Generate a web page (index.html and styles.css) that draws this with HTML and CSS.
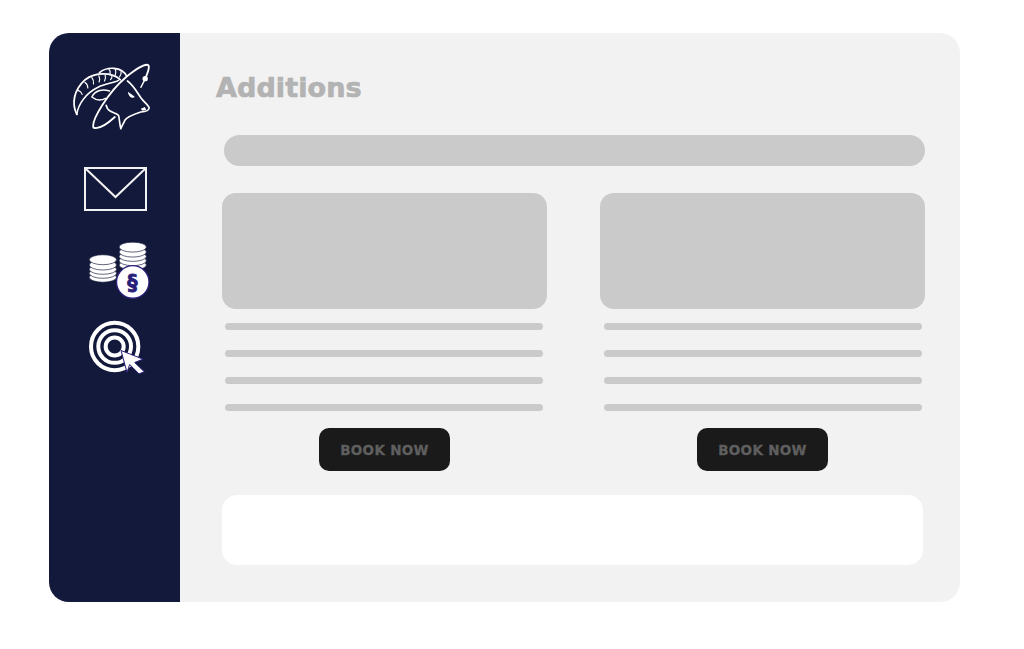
FILE: index.html
```html
<!DOCTYPE html>
<html lang="en">
<head>
  <meta charset="UTF-8" />
  <meta name="viewport" content="width=device-width, initial-scale=1.0"/>
  <title>Additions</title>
  <link rel="stylesheet" href="styles.css">
</head>
<body>
  <div class="frame">
    <nav class="sidebar">
      <svg class="logo" viewBox="60 65 245 210" fill="none" stroke="#fff" stroke-linecap="round" stroke-linejoin="round">
        <!-- ring -->
        <path stroke-width="5.5" d="M130 262C122 240 175 155 228 110C258 86 288 68 295 75C299 84 293 96 288 108M130 262C145 268 172 250 194 230"/>
        <circle cx="285" cy="115" r="8" fill="#fff" stroke="none"/>
        <path stroke-width="4" d="M283 120L272 141"/>
        <!-- head -->
        <path stroke-width="5" d="M232 122C250 135 262 158 272 172C282 186 296 195 297 203C296 212 284 214 272 215C250 222 232 228 224 240C220 250 214 258 212 265C208 250 208 235 205 225C196 216 180 218 172 205L168 195"/>
        <path fill="#fff" stroke="none" d="M233 154L252 168C256 172 250 173 245 172C238 170 234 162 233 154Z"/>
        <path fill="#fff" stroke="none" d="M272 205L284 200L288 208L276 211Z"/>
        <!-- horns -->
        <path stroke-width="5.5" d="M80 222C64 190 70 150 105 118C135 95 185 95 210 118"/>
        <path stroke-width="4.5" d="M80 222C84 190 108 158 145 140C165 130 190 128 205 120"/>
        <path stroke-width="3.5" d="M84 150C90 152 94 156 96 162M104 126C110 130 113 136 113 143M125 112C130 118 131 124 130 131M146 106C149 112 149 118 147 125M165 105C167 110 166 116 163 122M185 108C186 111 184 115 181 118"/>
        <path stroke-width="5" d="M148 97C170 78 215 78 230 108"/>
        <path stroke-width="3.5" d="M175 85C180 90 181 95 180 100M195 85C198 92 198 98 195 105M213 92C214 98 212 104 208 110"/>
        <!-- ear -->
        <path stroke-width="4.5" d="M125 170C135 148 160 146 178 152M125 170C140 182 155 180 166 174"/>
      </svg>

      <svg class="mail" viewBox="0 0 63 44" fill="none" stroke="#f2f2f2" stroke-width="2">
        <rect x="1" y="1" width="61" height="42"/>
        <path d="M1 1L31.5 30L62 1"/>
      </svg>

      <svg class="coins" viewBox="55 270 190 180">
        <g fill="#fff" stroke="#12193a" stroke-width="2">
          <ellipse cx="100" cy="382" rx="41" ry="15"/>
          <ellipse cx="100" cy="370" rx="41" ry="15"/>
          <ellipse cx="100" cy="358" rx="41" ry="15"/>
          <ellipse cx="100" cy="345" rx="41" ry="15"/>
          <ellipse cx="100" cy="329" rx="41" ry="15"/>
          <ellipse cx="190" cy="345" rx="41" ry="15"/>
          <ellipse cx="190" cy="332" rx="41" ry="15"/>
          <ellipse cx="190" cy="319" rx="41" ry="15"/>
          <ellipse cx="190" cy="306" rx="41" ry="15"/>
          <ellipse cx="190" cy="291" rx="41" ry="15"/>
        </g>
        <circle cx="190" cy="396" r="49" fill="#fff" stroke="#2a1f7a" stroke-width="4"/>
        <text class="coin-sign" x="189" y="419" text-anchor="middle">§</text>
      </svg>

      <svg class="target" viewBox="50 505 180 170" fill="none" stroke="#fff" stroke-width="12">
        <circle cx="133" cy="590" r="71"/>
        <circle cx="133" cy="590" r="49"/>
        <circle cx="133" cy="590" r="27"/>
        <path fill="#fff" stroke="#2a1f7a" stroke-width="3" stroke-linejoin="round" d="M152 602L218 628L193 638L222 666L206 672L178 644L170 668Z"/>
      </svg>
    </nav>

    <main class="content">
      <h1 class="page-title">Additions</h1>
      <div class="search-bar"></div>

      <div class="cards">
        <section class="card">
          <div class="card-image"></div>
          <div class="card-lines">
            <span></span><span></span><span></span><span></span>
          </div>
          <button class="book-btn">BOOK NOW</button>
        </section>
        <section class="card">
          <div class="card-image"></div>
          <div class="card-lines">
            <span></span><span></span><span></span><span></span>
          </div>
          <button class="book-btn">BOOK NOW</button>
        </section>
      </div>

      <div class="footer-box"></div>
    </main>
  </div>
</body>
</html>
```

FILE: styles.css
```css
body {
  margin: 0;
  padding: 33px 64px 47px 49px;
  background-color: #ffffff;
  font-family: "DejaVu Sans", "Liberation Sans", sans-serif;
}
.frame {
  display: flex;
  height: 569px;
  border-radius: 20px;
  overflow: hidden;
  background-color: #f2f2f2;
}
.sidebar {
  display: flex;
  flex-direction: column;
  width: 131px;
  flex-shrink: 0;
  background-color: #12193a;
}
.logo {
  width: 82px;
  height: 70px;
  margin: 29px 0 0 21px;
}
.mail {
  width: 63px;
  height: 44px;
  margin: 35px 0 0 35px;
}
.coins {
  width: 63px;
  height: 60px;
  margin: 29px 0 0 39px;
}
.coin-sign {
  font-family: "DejaVu Sans", sans-serif;
  font-size: 62px;
  font-weight: 700;
  fill: #2a1f7a;
  stroke: #2a1f7a;
  stroke-width: 2.5px;
}
.target {
  width: 60px;
  height: 57px;
  margin: 18px 0 0 38px;
}
.content {
  flex: 1;
  padding: 0 35px 0 42px;
}
.page-title {
  margin: 38px 0 0 -6px;
  height: 34px;
  font-size: 27px;
  line-height: 34px;
  font-weight: 700;
  letter-spacing: 0.1px;
  color: #b3b3b3;
  -webkit-text-stroke: 0.7px #b3b3b3;
}
.search-bar {
  height: 31px;
  margin: 30px 0 0 2px;
  border-radius: 16px;
  background-color: #cacaca;
}
.cards {
  display: grid;
  grid-template-columns: 325px 325px;
  justify-content: space-between;
  margin-top: 27px;
}
.card {
  display: flex;
  flex-direction: column;
}
.card-image {
  height: 116px;
  border-radius: 14px;
  background-color: #cacaca;
}
.card-lines {
  display: flex;
  flex-direction: column;
  gap: 20px;
  margin: 14px 4px 0 3px;
}
.card:last-child .card-lines {
  margin: 14px 3px 0 4px;
}
.card-lines span {
  height: 7px;
  border-radius: 4px;
  background-color: #cacaca;
}
.book-btn {
  align-self: center;
  width: 131px;
  height: 43px;
  margin-top: 17px;
  padding: 0;
  border: none;
  border-radius: 10px;
  background-color: #1a1a1a;
  color: #5f5f5f;
  font-family: inherit;
  font-size: 13.5px;
  font-weight: 700;
  letter-spacing: 0.3px;
  -webkit-text-stroke: 0.3px #5f5f5f;
}
.footer-box {
  width: 701px;
  height: 70px;
  margin-top: 24px;
  border-radius: 15px;
  background-color: #ffffff;
}
```
